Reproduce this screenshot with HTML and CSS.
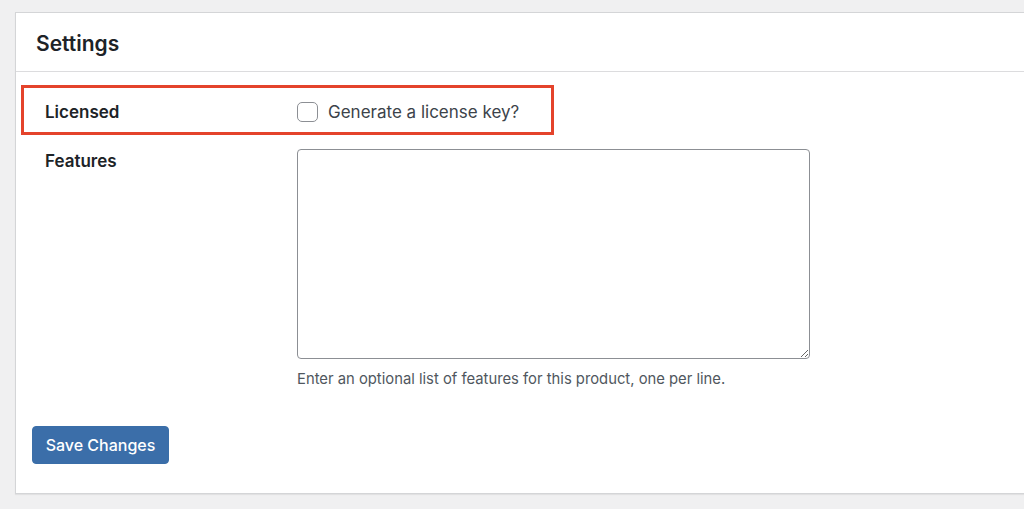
FILE: index.html
```html
<!DOCTYPE html>
<html lang="en">
<head>
<meta charset="utf-8">
<title>Settings</title>
<link rel="stylesheet" href="styles.css">
</head>
<body>
<div class="panel">
  <div class="panel-head"><h2 class="title">Settings</h2></div>
  <form class="panel-body">
    <div class="row row-highlight">
      <div class="label">Licensed</div>
      <label class="field check">
        <span class="checkbox"></span>
        <span class="check-text">Generate a license key?</span>
      </label>
    </div>
    <div class="row row-top">
      <div class="label">Features</div>
      <div class="field">
        <textarea class="textarea"></textarea>
        <p class="help">Enter an optional list of features for this product, one per line.</p>
      </div>
    </div>
    <div class="actions">
      <button type="button" class="button">Save Changes</button>
    </div>
  </form>
</div>
</body>
</html>
```
FILE: styles.css
```css
html, body {
  margin: 0;
  padding: 0;
  overflow: hidden;
  height: 509px;
}
body {
  background: #f0f0f1;
  font-family: Inter, "Noto Sans", "Liberation Sans", sans-serif;
  color: #1d2327;
  padding: 12px 0 0 15px;
}
.panel {
  width: 1040px;
  background: #fff;
  border: 1px solid #d4d5d7;
  box-shadow: 0 1px 1px rgba(0,0,0,0.06);
}
.panel-head {
  height: 58px;
  border-bottom: 1px solid #dcdcde;
  display: flex;
  align-items: center;
  padding-left: 20px;
}
.title {
  margin: 2px 0 0;
  font-size: 21px;
  font-weight: 600;
  color: #1d2327;
}
.panel-body {
  padding: 13px 0 29px 5px;
}
.row {
  display: flex;
  border: 3px solid transparent;
  width: 527px;
}
.row-highlight {
  border-color: #e4432b;
  height: 41px;
  padding-top: 3px;
  align-items: center;
}
.row-top {
  align-items: flex-start;
  padding-top: 11px;
  width: auto;
}
.label {
  width: 252px;
  padding-left: 21px;
  flex: none;
  font-size: 17px;
  font-weight: 600;
  line-height: 24px;
  color: #1d2327;
}
.field {
  display: flex;
  flex-direction: column;
}
.check {
  flex-direction: row;
  align-items: center;
  gap: 10px;
}
.checkbox {
  width: 19px;
  height: 18px;
  border: 1px solid #8c8f94;
  border-radius: 5px;
  background: #fff;
  box-sizing: content-box;
}
.check-text {
  font-size: 17px;
  color: #3c434a;
  line-height: 24px;
}
.textarea {
  width: 513px;
  height: 210px;
  box-sizing: border-box;
  border: 1px solid #8c8f94;
  border-radius: 4px;
  margin: 0;
  padding: 6px 8px;
  background: #fff;
  font-family: inherit;
  resize: vertical;
}
.help {
  margin: 10px 0 0;
  font-size: 14.8px;
  line-height: 20px;
  color: #50575e;
}
.actions {
  margin-top: 34px;
  padding-left: 11px;
}
.button {
  width: 137px;
  height: 38px;
  border: 1px solid #3a6ea8;
  border-radius: 4px;
  background: #3b6ea9;
  color: #fff;
  font-family: inherit;
  font-size: 16px;
  font-weight: 500;
  padding: 0;
  cursor: pointer;
}
```
